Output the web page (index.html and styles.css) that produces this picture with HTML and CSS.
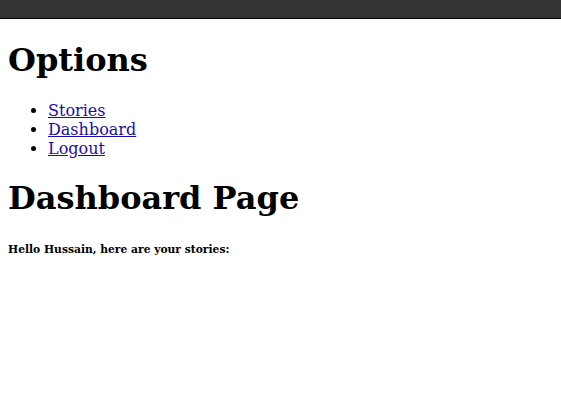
FILE: index.html
```html
<!DOCTYPE html>
<html>
<head>
<meta charset="utf-8">
<link rel="stylesheet" href="styles.css">
</head>
<body>
<div class="topbar"></div>
<div class="content">
<h1>Options</h1>
<ul class="menu">
<li><a href="#">Stories</a></li>
<li><a href="#">Dashboard</a></li>
<li><a href="#">Logout</a></li>
</ul>
<h1>Dashboard Page</h1>
<h6 class="greeting">Hello Hussain, here are your stories:</h6>
</div>
</body>
</html>
```
FILE: styles.css
```css
html, body {
  margin: 0;
  padding: 0;
  background: #fff;
  font-family: "DejaVu Serif", serif;
}
.topbar {
  height: 18px;
  background: #333333;
  border-bottom: 1px solid #000;
}
.content {
  padding: 1px 8px 0;
}
.menu {
  margin-bottom: 17px;
}
.greeting {
  margin-top: 26px;
}
a {
  color: #1a0dab;
}
```
